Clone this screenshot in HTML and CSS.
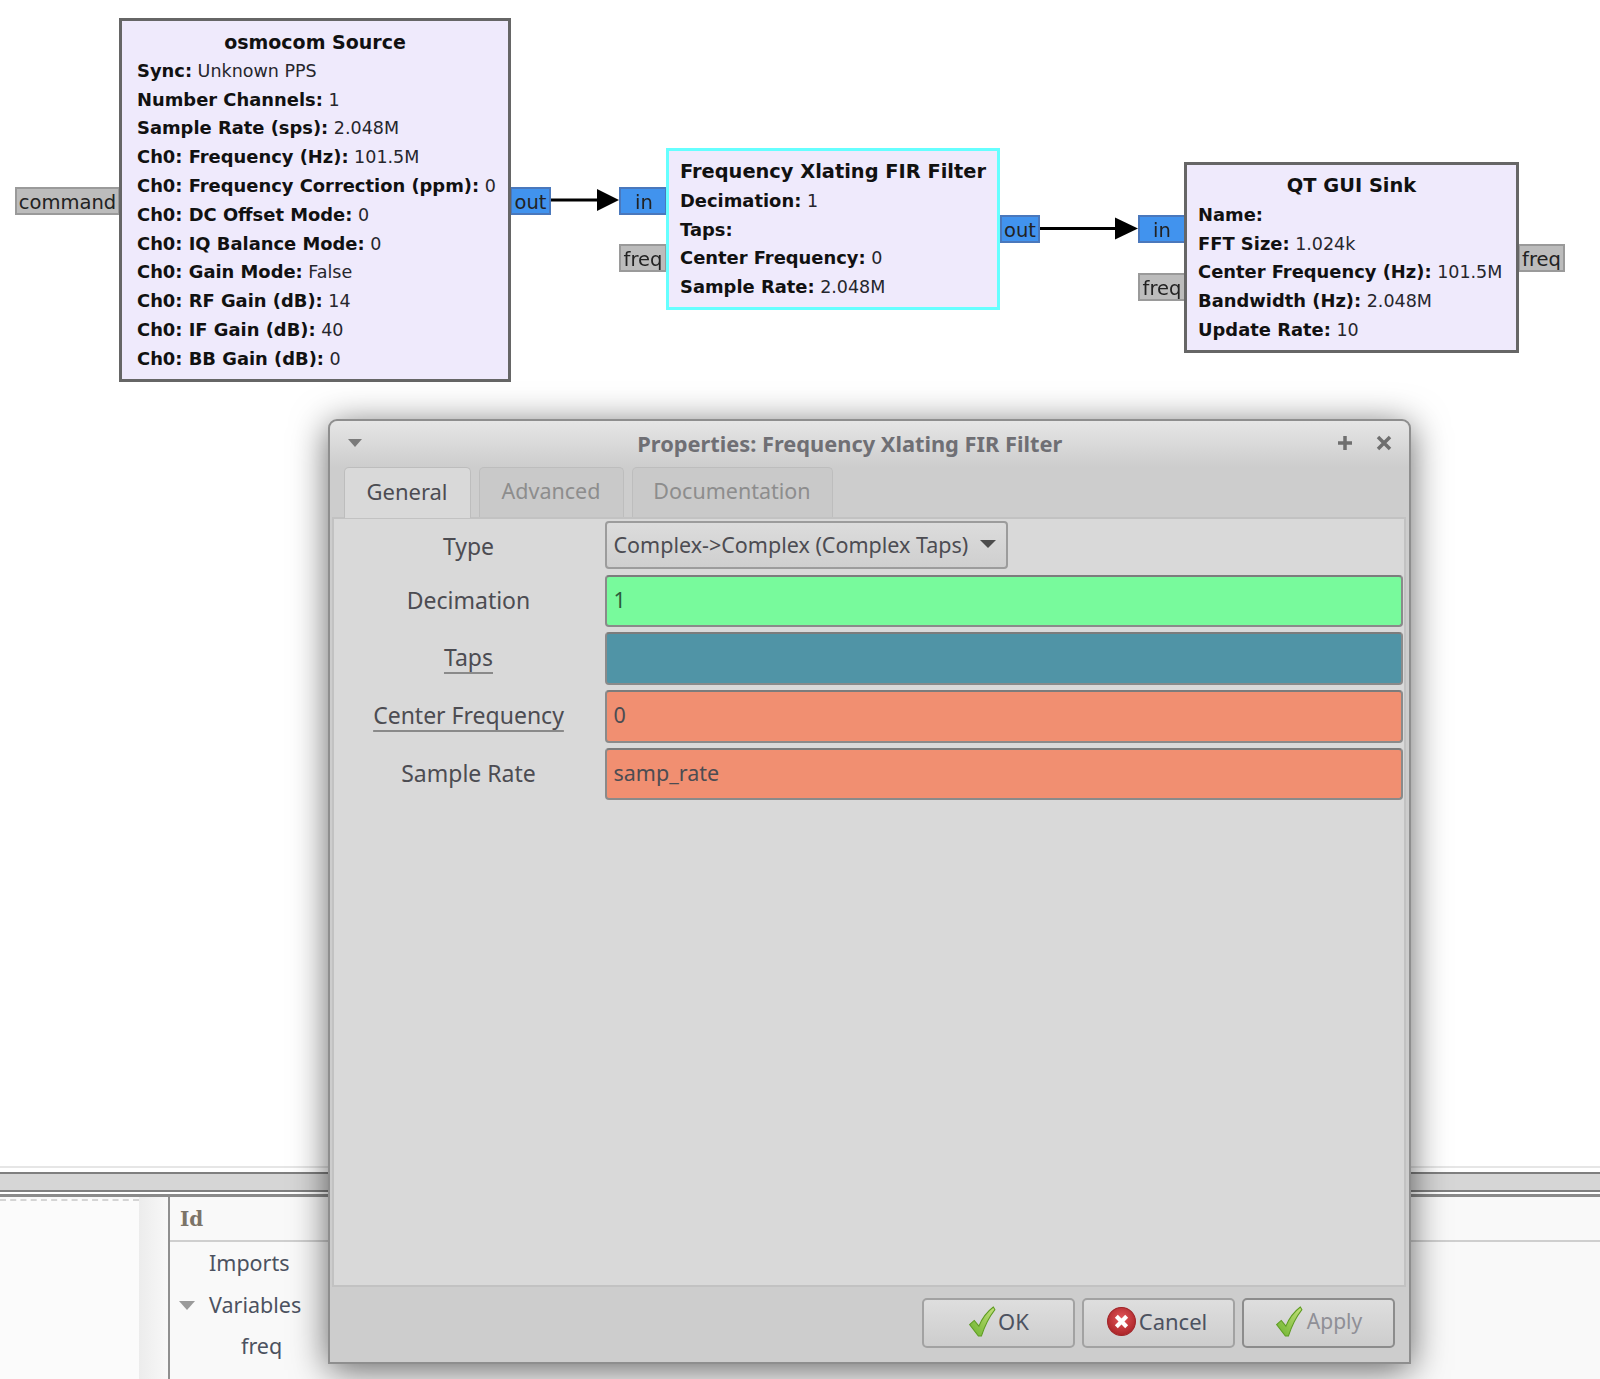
FILE: index.html
```html
<!DOCTYPE html>
<html lang="en">
<head>
  <meta charset="UTF-8" />
  <meta name="viewport" content="width=device-width, initial-scale=1.0"/>
  <title>Properties: Frequency Xlating FIR Filter</title>
  <link rel="stylesheet" href="styles.css">
</head>
<body>

  <div class="canvas">
    <svg class="wires" width="1600" height="400" viewBox="0 0 1600 400">
      <path class="wire" d="M551 200H600"/>
      <path class="head" d="M597 189L619 200L597 211Z"/>
      <path class="wire" d="M1040 228.500H1118"/>
      <path class="head" d="M1115 217.500L1138 228.500L1115 239.500Z"/>
    </svg>

    <div class="port msg port-command">command</div>
    <div class="port data port-out1">out</div>
    <div class="port data port-in1">in</div>
    <div class="port msg port-freq1">freq</div>
    <div class="port data port-out2">out</div>
    <div class="port data port-in2">in</div>
    <div class="port msg port-freq2">freq</div>
    <div class="port msg port-freq3">freq</div>

    <div class="block block-source">
      <div class="block-title">osmocom Source</div>
      <div><b>Sync:</b> Unknown PPS</div>
      <div><b>Number Channels:</b> 1</div>
      <div><b>Sample Rate (sps):</b> 2.048M</div>
      <div><b>Ch0: Frequency (Hz):</b> 101.5M</div>
      <div><b>Ch0: Frequency Correction (ppm):</b> 0</div>
      <div><b>Ch0: DC Offset Mode:</b> 0</div>
      <div><b>Ch0: IQ Balance Mode:</b> 0</div>
      <div><b>Ch0: Gain Mode:</b> False</div>
      <div><b>Ch0: RF Gain (dB):</b> 14</div>
      <div><b>Ch0: IF Gain (dB):</b> 40</div>
      <div><b>Ch0: BB Gain (dB):</b> 0</div>
    </div>

    <div class="block block-filter">
      <div class="block-title">Frequency Xlating FIR Filter</div>
      <div><b>Decimation:</b> 1</div>
      <div><b>Taps:</b></div>
      <div><b>Center Frequency:</b> 0</div>
      <div><b>Sample Rate:</b> 2.048M</div>
    </div>

    <div class="block block-sink">
      <div class="block-title">QT GUI Sink</div>
      <div><b>Name:</b></div>
      <div><b>FFT Size:</b> 1.024k</div>
      <div><b>Center Frequency (Hz):</b> 101.5M</div>
      <div><b>Bandwidth (Hz):</b> 2.048M</div>
      <div><b>Update Rate:</b> 10</div>
    </div>
  </div>

  <div class="splitter"></div>

  <div class="bottom">
    <div class="console"></div>
    <div class="gutter"></div>
    <div class="tree">
      <div class="tree-head">Id</div>
      <div class="tree-row tree-l1">Imports</div>
      <div class="tree-row tree-l1"><span class="tree-arrow"></span>Variables</div>
      <div class="tree-row tree-l2">freq</div>
    </div>
  </div>

  <div class="dialog">
    <div class="titlebar">
      <span class="title-menu"></span>
      <span class="title-text">Properties: Frequency Xlating FIR Filter</span>
      <svg class="title-btn title-plus" width="16" height="16" viewBox="0 0 16 16"><path d="M8 1V15M1 8H15"/></svg>
      <svg class="title-btn title-close" width="16" height="16" viewBox="0 0 16 16"><path d="M2 2L14 14M14 2L2 14"/></svg>
    </div>

    <div class="tabs">
      <div class="tab active">General</div>
      <div class="tab tab-advanced">Advanced</div>
      <div class="tab tab-docs">Documentation</div>
    </div>

    <div class="panel">
      <div class="form">
        <label>Type</label>
        <div class="select">Complex-&gt;Complex (Complex Taps)<span class="select-arrow"></span></div>
        <label>Decimation</label>
        <div class="field green">1</div>
        <label><u>Taps</u></label>
        <div class="field teal"></div>
        <label><u>Center Frequency</u></label>
        <div class="field salmon">0</div>
        <label>Sample Rate</label>
        <div class="field salmon">samp_rate</div>
      </div>
    </div>

    <div class="actions">
      <button>
        <svg width="28" height="31" viewBox="0 0 26 30">
          <defs>
            <linearGradient id="checkFill" x1="1" y1="0" x2="0" y2="1">
              <stop offset="0" stop-color="#c4e07a"/>
              <stop offset="1" stop-color="#6cb32e"/>
            </linearGradient>
            <radialGradient id="stopFill" cx="0.5" cy="0.4" r="0.6">
              <stop offset="0" stop-color="#e4585c"/>
              <stop offset="1" stop-color="#ab2428"/>
            </radialGradient>
          </defs>
          <path class="check" d="M1 18L5.500 14L10 19.500C13 12 18 5.500 24 1L25.500 3.500C20 10.500 15.500 19.500 12.500 29L9.500 29Z"/>
        </svg>
        OK
      </button>
      <button class="cancel">
        <svg width="31" height="31" viewBox="0 0 30 30">
          <circle class="stop" cx="15" cy="15" r="13.500"/>
          <path class="stop-x" d="M10 10L20 20M20 10L10 20"/>
        </svg>
        Cancel
      </button>
      <button class="apply">
        <svg width="28" height="31" viewBox="0 0 26 30"><path class="check" d="M1 18L5.500 14L10 19.500C13 12 18 5.500 24 1L25.500 3.500C20 10.500 15.500 19.500 12.500 29L9.500 29Z"/></svg>
        Apply
      </button>
    </div>
  </div>

</body>
</html>
```

FILE: styles.css
```css
* { box-sizing: border-box; }
html, body { height: 100%; }
body {
  margin: 0;
  background: #fff;
  overflow: hidden;
  display: flex;
  flex-direction: column;
  position: relative;
  font-family: 'Noto Sans', sans-serif;
  color: #4c4c52;
  filter: blur(0.45px);
}

/* flow graph */
.canvas { position: relative; height: 1166px; flex: none; }
.wires { position: absolute; left: 0; top: 0; }
.wire { stroke: #000; stroke-width: 3; fill: none; }
.head { fill: #000; }

.block {
  position: absolute;
  background: #efeafc;
  border: 3px solid #666;
  font-family: 'DejaVu Sans', sans-serif;
  font-size: 17.500px;
  line-height: 28.800px;
  color: #26262c;
  padding: 7px 0 0 11px;
  white-space: nowrap;
}
.block b, .block-title { color: #111; font-weight: bold; font-size: 17.900px; }
.block-title { text-align: center; font-size: 19.400px; }
.block-source { left: 119px; top: 18px; width: 392px; height: 363.500px; padding-left: 15px; }
.block-filter { left: 666px; top: 148px; width: 334px; height: 162px; border-color: #6ff; }
.block-sink { left: 1184px; top: 162px; width: 335px; height: 191px; }
.block-source .block-title { padding-right: 15px; font-size: 19px; }
.block-filter .block-title, .block-sink .block-title { padding-right: 11px; }

.port {
  position: absolute;
  height: 28px;
  border: 2px solid;
  font-family: 'DejaVu Sans', sans-serif;
  font-size: 19.500px;
  line-height: 28px;
  text-align: center;
  color: #222;
  white-space: nowrap;
}
.data { background: #4193ee; border-color: #4a78bc; }
.msg { background: #bcbcbc; border-color: #9a9a9a; }
.port-command { left: 15px; top: 187px; width: 105px; }
.port-out1 { left: 510px; top: 187px; width: 41px; }
.port-in1 { left: 619px; top: 187px; width: 48px; padding-left: 2px; }
.port-freq1 { left: 619px; top: 244px; width: 48px; }
.port-out2 { left: 1000px; top: 215px; width: 40px; }
.port-in2 { left: 1138px; top: 215px; width: 48px; }
.port-freq2 { left: 1138px; top: 273px; width: 48px; }
.port-freq3 { left: 1518px; top: 244px; width: 47px; }

/* pane divider */
.splitter {
  flex: none;
  height: 31px;
  background: linear-gradient(#e6e6e6 0 2px, #fff 2px);
  position: relative;
  border-bottom: 3px solid #8a8a8a;
}
.splitter::before {
  content: '';
  position: absolute;
  left: 0;
  right: 0;
  top: 6px;
  height: 16px;
  background: #d6d6d6;
  border-top: 2px solid #7f7f7f;
  border-bottom: 2px solid #7f7f7f;
}

/* bottom panes */
.bottom { flex: 1; display: flex; background: #f9f9f9; color: #4c5260; }
.console {
  width: 139px;
  background: #fbfbfb;
  border-top: 2px dashed #d4d4d4;
  margin-top: 2px;
}
.gutter { width: 29px; background: linear-gradient(90deg, #ececec, #f8f8f8); }
.tree {
  flex: 1;
  border-left: 2px solid #8f8f8f;
  font-size: 21.500px;
}
.tree-head {
  height: 45px;
  padding-left: 10px;
  line-height: 44px;
  font-family: 'DejaVu Serif', serif;
  font-weight: bold;
  color: #7c7468;
  border-bottom: 2px solid #cfcfcf;
  font-size: 20px;
}
.tree-row { height: 41.500px; line-height: 41px; position: relative; }
.tree-l1 { padding-left: 39px; }
.tree-l2 { padding-left: 71px; }
.tree-arrow {
  position: absolute;
  left: 9px;
  top: 17px;
  border-left: 8px solid transparent;
  border-right: 8px solid transparent;
  border-top: 9px solid #9a9a9a;
}

/* properties window */
.dialog {
  position: absolute;
  left: 327.500px;
  top: 419px;
  width: 1083.500px;
  height: 945px;
  display: flex;
  flex-direction: column;
  background: #cdcdcd;
  border: 2px solid #8e8e8e;
  border-radius: 9px 9px 0 0;
  box-shadow: 0 6px 36px rgba(0, 0, 0, 0.6);
}
.titlebar {
  position: relative;
  flex: none;
  height: 46px;
  text-align: center;
  line-height: 46px;
  padding-right: 39px;
  font-size: 21.800px;
  font-weight: bold;
  color: #6f6f74;
  border-radius: 8px 8px 0 0;
  background: linear-gradient(#e6e6e6, #cdcdcd);
}
.title-menu {
  position: absolute;
  left: 18px;
  top: 18px;
  border-left: 7px solid transparent;
  border-right: 7px solid transparent;
  border-top: 8px solid #7a7a7a;
}
.title-btn { position: absolute; top: 14px; fill: none; stroke: #6f6f6f; stroke-width: 3.500; }
.title-plus { right: 56px; }
.title-close { right: 17px; }

.tabs { flex: none; display: flex; height: 50px; padding-left: 14px; gap: 8px; font-size: 21.500px; }
.tab {
  height: 50px;
  background: #c9c9c9;
  border: 1px solid #bdbdbd;
  border-bottom: none;
  border-radius: 5px 5px 0 0;
  color: #8d8d8d;
  text-align: center;
  line-height: 45px;
  width: 145px;
}
.tab.active {
  width: 127px;
  height: 51px;
  background: #d9d9d9;
  color: #4c4c52;
  font-size: 22px;
  line-height: 46px;
  position: relative;
  z-index: 1;
}
.tab-docs { width: 201px; }

.panel {
  flex: 1;
  margin: 0 3px 0 2px;
  background: #d9d9d9;
  border: 2px solid #c2c2c2;
  padding-top: 2px;
}
.form {
  display: grid;
  grid-template-columns: 271px 1fr;
  grid-template-rows: 49px 52px 53px 53px 52px;
  row-gap: 5px;
  font-size: 21.500px;
}
.form label { text-align: center; line-height: 50px; padding-right: 1px; font-size: 23px; }
.form u {
  text-decoration-color: #8a8a8a;
  text-decoration-skip-ink: none;
  text-underline-offset: 6px;
}

.select {
  width: 403px;
  height: 48px;
  padding: 0 10px 2px 7px;
  border: 2px solid #9c9c9c;
  border-radius: 4px;
  background: linear-gradient(#dcdcdc, #cfcfcf);
  display: flex;
  justify-content: space-between;
  align-items: center;
}
.select-arrow {
  border-left: 8px solid transparent;
  border-right: 8px solid transparent;
  border-top: 8px solid #4c4c4c;
}
.field {
  margin-right: 1px;
  padding: 0 7px;
  line-height: 46px;
  border: 2px solid #8a8a8a;
  border-top-color: #7c7c7c;
  border-radius: 4px;
}
.green { background: #78fa9c; color: #2c5c3c; }
.teal { background: #5094a6; }
.salmon { background: #f18f71; }

.actions {
  flex: none;
  height: 75px;
  display: flex;
  justify-content: flex-end;
  gap: 7px;
  padding: 11px 14px 0 0;
}
button {
  width: 153px;
  height: 50px;
  display: flex;
  align-items: center;
  justify-content: center;
  gap: 2px;
  font-family: inherit;
  font-size: 22px;
  color: #4c5260;
  border: 2px solid #a2a2a2;
  border-radius: 5px;
  background: linear-gradient(#dedede, #cdcdcd);
  padding: 0 0 4px;
}
button.cancel { padding-right: 4px; }
button.apply { color: #8f8f96; border-color: #8c8c8c; font-size: 21px; gap: 4px; }
.check { fill: url(#checkFill); stroke: #5e9c22; stroke-width: 1; }
.stop { fill: url(#stopFill); stroke: #a02428; stroke-width: 1; }
.stop-x { stroke: #fff; stroke-width: 4; fill: none; }
```
